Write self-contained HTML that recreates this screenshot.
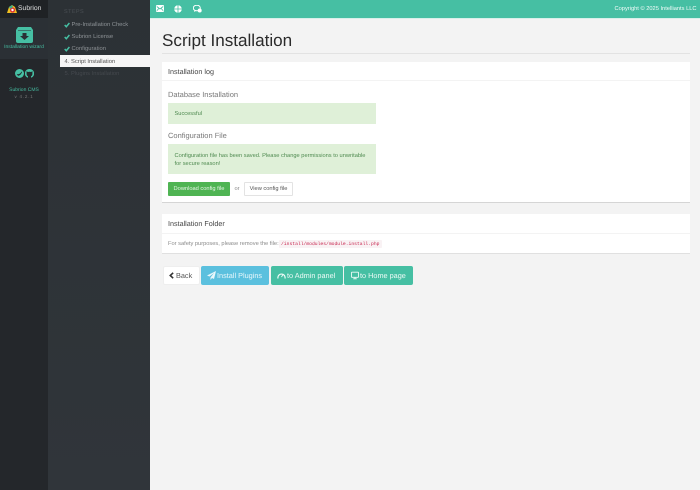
<!DOCTYPE html>
<html><head><meta charset="utf-8">
<style>
html,body{margin:0;padding:0;width:700px;height:490px;overflow:hidden;background:#f3f3f3;font-family:"Liberation Sans",sans-serif;text-rendering:geometricPrecision}
div,span,code{position:absolute;white-space:nowrap;box-sizing:border-box}
.t{line-height:1}
svg{position:absolute}
.btn{border-radius:2px;color:#fff;font-size:7.300px;line-height:19px;height:19px;top:266px}
#w{left:0;top:0;width:700px;height:490px;overflow:hidden;background:#f3f3f3;filter:blur(.25px)}
</style></head><body><div id="w">
<div style="left:0;top:0;width:48px;height:490px;background:#24272b"></div>
<div style="left:0;top:0;width:48px;height:18px;background:#1f2225"></div>
<div style="left:0;top:18px;width:48px;height:41px;background:#2b3035"></div>
<div style="left:48px;top:0;width:102px;height:490px;background:linear-gradient(#2c3135,#30353a)"></div>
<svg style="left:7px;top:3.500px" width="10" height="10" viewBox="0 0 10 10"><path d="M0 9L2 3L5 1L8 3L10 9Z" fill="#f0c020"/><circle cx="5.500" cy="6" r="2.600" fill="#d33"/><circle cx="5.500" cy="6" r="1.200" fill="#fff"/><path d="M2 3L5 1L6 3L3 5Z" fill="#3cae8c"/></svg>
<div class="t" style="left:18px;top:6px;font-size:6.800px;color:#ddd">Subrion</div>
<svg style="left:16px;top:27px" width="17" height="16" viewBox="0 0 17 16"><path d="M2 0H15L17 3V14Q17 16 15 16H2Q0 16 0 14V3Z" fill="#46bfa3"/><rect x="2" y="3" width="13" height="1" fill="#2b3035" opacity=".5"/><path d="M6.500 6H10.500V9H13L8.500 13L4 9H6.500Z" fill="#2b3035"/></svg>
<div class="t" style="left:0;width:48px;text-align:center;top:44.500px;font-size:5px;color:#46bfa3">Installation wizard</div>
<svg style="left:14.500px;top:69px" width="9" height="9" viewBox="0 0 9 9"><circle cx="4.500" cy="4.500" r="4.500" fill="#46bfa3"/><path d="M2 5.500Q5 6 6.800 2.800Q6 5.500 3.500 6.500Z" fill="#24272b" stroke="#24272b" stroke-width=".6"/></svg>
<svg style="left:24.500px;top:69px" width="9" height="9" viewBox="0 0 9 9"><path d="M4.500 0A4.500 4.500 0 0 0 3 8.800V7.200Q1.400 6.600 1.600 4.200L1.500 2.200L3 3Q4.500 2.600 6 3L7.500 2.200L7.400 4.200Q7.600 6.600 6 7.200V8.800A4.500 4.500 0 0 0 4.500 0Z" fill="#46bfa3"/></svg>
<div class="t" style="left:0;width:48px;text-align:center;top:88px;font-size:5px;color:#46bfa3">Subrion CMS</div>
<div class="t" style="left:0;width:48px;text-align:center;top:95px;font-size:4.500px;letter-spacing:.8px;color:#777">v 4.2.1</div>

<div class="t" style="left:64px;top:10px;font-size:5.500px;letter-spacing:.4px;color:#4a4f54">STEPS</div>
<svg style="left:64px;top:21.500px" width="6" height="6" viewBox="0 0 6 6"><path d="M.7 3L2.300 4.700L5.400 1" fill="none" stroke="#46bfa3" stroke-width="1.500"/></svg>
<div class="t" style="left:71.500px;top:23px;font-size:5.800px;color:#8c9195">Pre-Installation Check</div>
<svg style="left:64px;top:33.500px" width="6" height="6" viewBox="0 0 6 6"><path d="M.7 3L2.300 4.700L5.400 1" fill="none" stroke="#46bfa3" stroke-width="1.500"/></svg>
<div class="t" style="left:71.500px;top:35px;font-size:5.800px;color:#8c9195">Subrion License</div>
<svg style="left:64px;top:45.500px" width="6" height="6" viewBox="0 0 6 6"><path d="M.7 3L2.300 4.700L5.400 1" fill="none" stroke="#46bfa3" stroke-width="1.500"/></svg>
<div class="t" style="left:71.500px;top:47px;font-size:5.800px;color:#8c9195">Configuration</div>
<div style="left:60px;top:55px;width:90px;height:12px;background:#f6f6f6"></div>
<div class="t" style="left:64.500px;top:59.500px;font-size:5.800px;color:#555">4.</div>
<div class="t" style="left:71px;top:59.500px;font-size:5.800px;color:#555">Script Installation</div>
<div class="t" style="left:64.500px;top:71.500px;font-size:5.800px;color:#44494e">5.</div>
<div class="t" style="left:71px;top:71.500px;font-size:5.800px;color:#44494e">Plugins Installation</div>

<div style="left:150px;top:0;width:550px;height:19px;background:#46bfa3;border-bottom:1px solid #d8f0ea"></div>
<svg style="left:155.500px;top:5px" width="8" height="7" viewBox="0 0 8 7"><rect width="8" height="7" rx="1" fill="#fff"/><path d="M.8 1.500L4 4L7.200 1.500M.8 5.800L2.800 3.500M7.200 5.800L5.200 3.500" fill="none" stroke="#46bfa3" stroke-width=".8"/></svg>
<svg style="left:174px;top:4.500px" width="8" height="8" viewBox="0 0 8 8"><circle cx="4" cy="4" r="3.800" fill="#fff"/><path d="M0 4H8M4 0V8" stroke="#46bfa3" stroke-width=".8"/></svg>
<svg style="left:193px;top:4.500px" width="9" height="8" viewBox="0 0 9 8"><ellipse cx="3.800" cy="3" rx="3.500" ry="2.800" fill="none" stroke="#fff" stroke-width="1"/><path d="M1.500 5L1 7L3.500 5.500Z" fill="#fff"/><circle cx="6.700" cy="5.500" r="2" fill="#fff"/></svg>
<div class="t" style="right:3.500px;top:7px;font-size:5.700px;color:#f2fbf9">Copyright © 2025 Intelliants LLC</div>

<div class="t" style="left:162px;top:31.500px;font-size:17.100px;color:#2b2b2b">Script Installation</div>
<div style="left:162px;top:53px;width:528px;height:1px;background:#e2e2e2"></div>

<div style="left:162px;top:62px;width:528px;height:141px;background:#fff;border-bottom:1px solid #d5d5d5"></div>
<div style="left:162px;top:80px;width:528px;height:1px;background:#f3f3f3"></div>
<div class="t" style="left:168px;top:67.500px;font-size:7.200px;color:#444">Installation log</div>
<div class="t" style="left:168px;top:90.500px;font-size:7.500px;color:#777">Database Installation</div>
<div style="left:168px;top:103px;width:208px;height:21px;background:#dff0d8"></div>
<div class="t" style="left:174.500px;top:112px;font-size:5.700px;color:#4f8a50">Successful</div>
<div class="t" style="left:168px;top:132px;font-size:7.500px;color:#777">Configuration File</div>
<div style="left:168px;top:144px;width:208px;height:30px;background:#dff0d8"></div>
<div class="t" style="left:174.500px;top:154px;font-size:5.700px;color:#4f8a50">Configuration file has been saved. Please change permissions to unwritable</div>
<div class="t" style="left:174.500px;top:161.500px;font-size:5.700px;color:#4f8a50">for secure reason!</div>
<div class="t" style="left:168px;top:182px;width:62px;height:14px;background:#4fb453;border-radius:1px;color:#e8f5e8;font-size:5.700px;text-align:center;line-height:14px">Download config file</div>
<div class="t" style="left:234.500px;top:187px;font-size:5.700px;color:#888">or</div>
<div class="t" style="left:244px;top:182px;width:49px;height:14px;background:#fff;border:1px solid #e3e3e3;border-radius:1px;color:#555;font-size:5.700px;text-align:center;line-height:12px">View config file</div>

<div style="left:162px;top:214px;width:528px;height:40px;background:#fff;border-bottom:1px solid #e0e0e0"></div>
<div style="left:162px;top:233px;width:528px;height:1px;background:#f3f3f3"></div>
<div class="t" style="left:168px;top:220px;font-size:7.200px;color:#444">Installation Folder</div>
<div class="t" style="left:168px;top:242px;font-size:5.700px;color:#8a8a8a">For safety purposes, please remove the file:</div>
<div style="left:279px;top:240px;width:103px;height:8px;background:#f9f2f4;border-radius:1px"></div>
<code class="t" style="left:281px;top:243px;font-family:'Liberation Mono',monospace;font-size:4.700px;color:#c7254e">/install/modules/module.install.php</code>

<div class="btn" style="left:162.500px;width:37px;background:#fff;border:1px solid #eee;color:#555;line-height:17px"><span class="t" style="left:12.500px;top:5px;font-size:7.300px">Back</span></div>
<svg style="left:169px;top:272px" width="5" height="7" viewBox="0 0 6 8"><path d="M5 .8L1.500 4L5 7.200" fill="none" stroke="#333" stroke-width="1.900"/></svg>
<div class="btn" style="left:201px;width:68px;background:#5bc0de"><span class="t" style="left:16px;top:6px;font-size:7.300px;color:#e8f7fb">Install Plugins</span></div>
<svg style="left:207px;top:271px" width="9" height="9" viewBox="0 0 9 9"><path d="M9 0L0 4.500L2.500 5.500L7 2L3.500 6.500V9L5 7L7 8Z" fill="#e8f7fb"/></svg>
<div class="btn" style="left:271px;width:71.500px;background:#46bfa3"><span class="t" style="left:16px;top:6px;font-size:7.300px;color:#f0fbf8">to Admin panel</span></div>
<svg style="left:277px;top:272px" width="9" height="7" viewBox="0 0 9 7"><path d="M1 6.500A3.600 3.600 0 1 1 8 6.500" fill="none" stroke="#f0fbf8" stroke-width="1.200"/><path d="M4.500 5L6 2.500" stroke="#f0fbf8" stroke-width=".9"/></svg>
<div class="btn" style="left:344px;width:69px;background:#46bfa3"><span class="t" style="left:16px;top:6px;font-size:7.300px;color:#f0fbf8">to Home page</span></div>
<svg style="left:351px;top:271px" width="8" height="9" viewBox="0 0 9 9"><rect x=".5" y=".8" width="8" height="5.700" rx=".6" fill="none" stroke="#f0fbf8"/><path d="M2.500 8.200H6.500M4.500 6.500V8" stroke="#f0fbf8"/></svg>
</div></body></html>
